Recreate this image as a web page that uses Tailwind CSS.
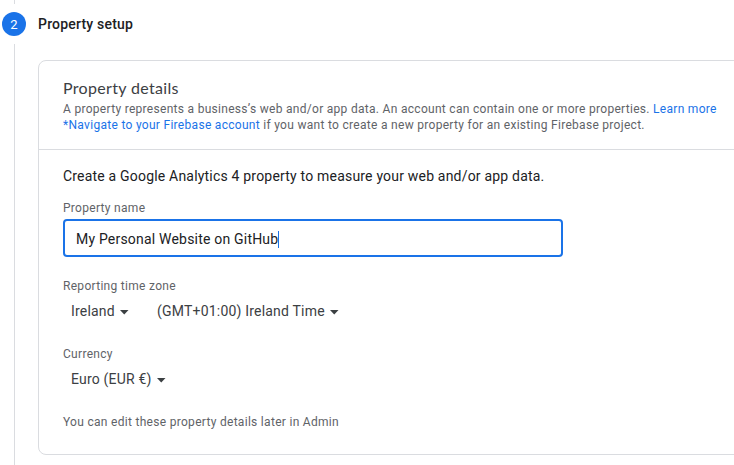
<!DOCTYPE html>
<html lang="en"><head><meta charset="utf-8"><title>Property setup</title>
<script src="https://cdn.jsdelivr.net/npm/@tailwindcss/browser@4"></script></head>
<body class="w-[734px] h-[465px] overflow-hidden bg-white font-[Roboto,sans-serif] text-[#202124]">
<div class="flex h-[465px]">
<div class="flex w-[38px] shrink-0 flex-col pl-[2px]">
<div class="ml-[12px] h-[4px] w-px bg-[#dadce0]"></div>
<div class="mt-[8px] flex size-[24px] items-center justify-center rounded-full bg-[#1a73e8] pt-px text-[13px] text-white">2</div>
<div class="ml-[12px] mt-[8px] w-px flex-1 bg-[#dadce0]"></div>
</div>
<main class="w-[720px] shrink-0">
<h1 class="h-[60px] pt-[14px] text-[14px] font-medium leading-[20px] tracking-[0.2px]">Property setup</h1>
<section class="h-[395px] rounded-[8px] border border-[#dadce0]">
<header class="h-[89px] border-b border-[#dadce0] pl-[24px] pt-[15px]">
<h2 class="font-[Lato,sans-serif] text-[16px] leading-[24px] tracking-[0.33px] text-[#3c4043]">Property details</h2>
<p class="mt-px whitespace-nowrap text-[12px] leading-[16px] tracking-[0.296px] text-[#5f6368]">A property represents a business’s web and/or app data. An account can contain one or more properties. <a class="text-[#1a73e8]">Learn more</a><br><a class="text-[#1a73e8]">*Navigate to your Firebase account</a> if you want to create a new property for an existing Firebase project.</p>
</header>
<div class="pl-[24px] pt-[16px]">
<p class="text-[14px] leading-[20px] tracking-[0.195px]">Create a Google Analytics 4 property to measure your web and/or app data.</p>
<div class="mt-[14px] text-[12px] leading-[16px] tracking-[0.296px] text-[#5f6368]">Property name</div>
<div class="mt-[3px] flex h-[38px] w-[500px] items-center rounded-[4px] border-2 border-[#1a73e8] pl-[11px] pt-[2px] text-[14px] tracking-[0.2px]"><span>My Personal Website on GitHub</span><span class="h-[17px] w-px bg-[#1a73e8]"></span></div>
<div class="mt-[21px] text-[12px] leading-[16px] tracking-[0.296px] text-[#5f6368]">Reporting time zone</div>
<div class="mt-[7px] flex pl-[8px] text-[14px] leading-[20px] tracking-[0.2px] text-[#3c4043]"><div class="flex w-[86px] items-center">Ireland<svg class="ml-[5px] mt-[2px]" width="9" height="5"><path d="M0 0h8.5L4.25 4.5z" fill="#3c4043"/></svg></div><div class="flex items-center">(GMT+01:00) Ireland Time<svg class="ml-[5px] mt-[2px]" width="9" height="5"><path d="M0 0h8.5L4.25 4.5z" fill="#3c4043"/></svg></div></div>
<div class="mt-[25px] text-[12px] leading-[16px] tracking-[0.296px] text-[#5f6368]">Currency</div>
<div class="mt-[7px] flex items-center pl-[8px] text-[14px] leading-[20px] tracking-[0.2px] text-[#3c4043]">Euro (EUR €)<svg class="ml-[5px] mt-[2px]" width="9" height="5"><path d="M0 0h8.5L4.25 4.5z" fill="#3c4043"/></svg></div>
<p class="mt-[25px] text-[12px] leading-[16px] tracking-[0.296px] text-[#5f6368]">You can edit these property details later in Admin</p>
</div></section></main></div>
</body></html>
